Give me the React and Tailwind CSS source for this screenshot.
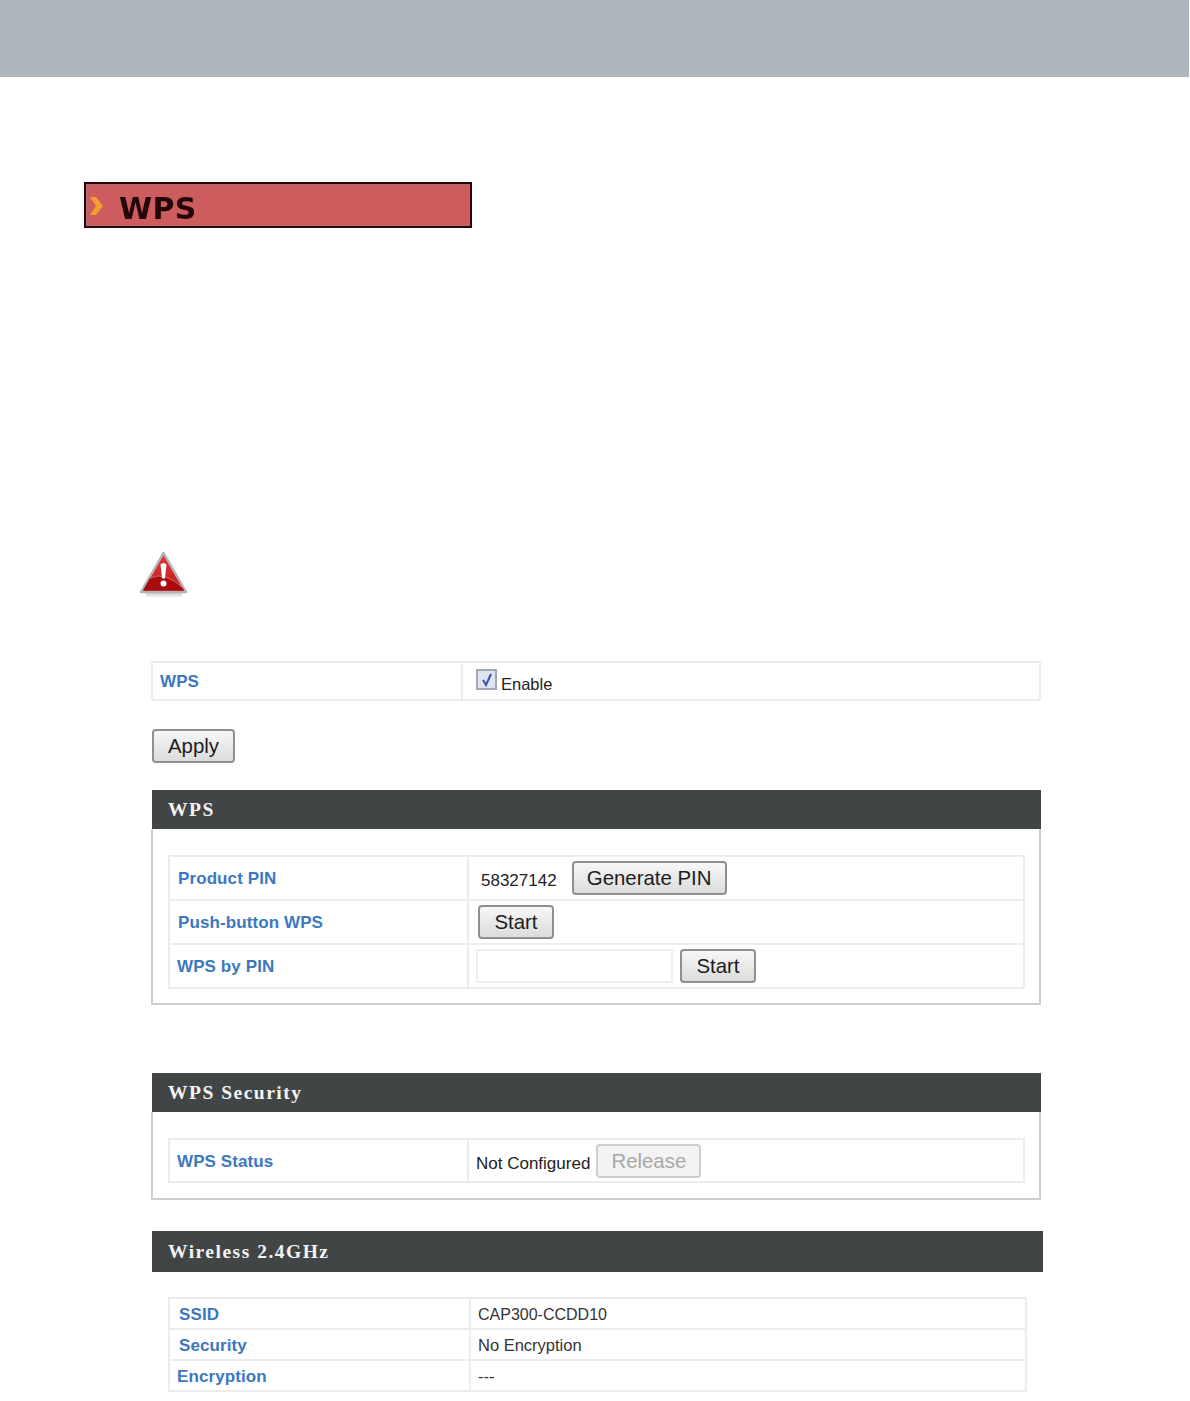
import React from 'react';

const Label = ({ children, className = '' }) => (
  <span className={`font-bold text-[#3c78c0] text-[17px] tracking-[0.1px] mt-[2px] ${className}`}>{children}</span>
);

const Btn = ({ children, className = '', disabled }) => (
  <button
    disabled={disabled}
    className={`h-[34px] rounded-[4px] border-2 pt-[1px] text-[20.4px] leading-none ${
      disabled
        ? 'border-[#cdcdcd] bg-[#f3f3f3] text-[#a8a8a8]'
        : 'border-[#8f8f8f] bg-gradient-to-b from-[#f7f7f7] to-[#dcdcdc] text-[#1c1c1c]'
    } ${className}`}
  >
    {children}
  </button>
);

const PanelHead = ({ children, className = 'h-[39px]' }) => (
  <div className={`bg-[#424546] flex items-center pl-[16px] font-['Liberation_Serif',serif] font-bold text-[19.5px] tracking-[1.5px] text-[#f4f4f4] ${className}`}>
    {children}
  </div>
);

const Row = ({ label, children, rowClass = 'h-[44px]', labelClass = 'pl-[8px]', split = 'w-[299px]', last }) => (
  <div className={`flex ${rowClass} ${last ? '' : 'border-b-2 border-[#ececec]'}`}>
    <div className={`${split} shrink-0 flex items-center border-r-2 border-[#ececec] ${labelClass}`}>
      <Label>{label}</Label>
    </div>
    <div className="flex-1 flex items-center">{children}</div>
  </div>
);

const WarningIcon = () => (
  <svg width="50" height="48" viewBox="0 0 50 48" className="block">
    <defs>
      <linearGradient id="warnRed" x1="0" y1="0" x2="0" y2="1">
        <stop offset="0" stopColor="#dc3a3c" />
        <stop offset="1" stopColor="#c01a1c" />
      </linearGradient>
      <linearGradient id="warnShadow" x1="0" y1="0" x2="0" y2="1">
        <stop offset="0" stopColor="#c4c4c4" />
        <stop offset="1" stopColor="#ffffff" />
      </linearGradient>
    </defs>
    <rect x="7" y="41" width="36" height="6" fill="url(#warnShadow)" />
    <path d="M24.5 2 L47 41 L2 41 Z" fill="url(#warnRed)" stroke="#b4b4b4" strokeWidth="2.5" strokeLinejoin="round" />
    <path d="M4 39.5 L11 27 Q26 20 44 37 L45 39.5 Z" fill="#a80c0e" />
    <path d="M11 27 Q26 20 44 37" fill="none" stroke="#e88585" strokeWidth="1" opacity="0.7" />
    <path d="M21.5 13.5 Q24.5 10.5 27.5 13.5 L26 27 Q24.5 28.5 23 27 Z" fill="#fff" />
    <circle cx="24.5" cy="32.5" r="3" fill="#fff" />
  </svg>
);

export default function App() {
  return (
    <div className="bg-white h-[1401px] w-[1190px] overflow-hidden font-['Liberation_Sans',Arial,sans-serif] text-[#222]">
      <div className="h-[77px] w-[1189px] bg-[#adb5bd]" />

      {/* Section title */}
      <div className="ml-[84px] mt-[105px] w-[388px] h-[46px] border-2 border-[#2e0206] bg-[#cd5c5e] shadow-[inset_0_0_0_1px_#a87072] flex items-center">
        <svg width="18" height="22" viewBox="0 0 18 22" className="ml-[2px] mt-[2px] shrink-0 blur-[0.7px]">
          <path d="M2 2 L8 2 L15 11 L8 20 L2 20 L8 11 Z" fill="#efa030" />
        </svg>
        <span className="ml-[13px] mt-[7px] font-['DejaVu_Sans',sans-serif] font-bold text-[30px] leading-none text-[#24060a] blur-[0.6px] tracking-[0.3px]">WPS</span>
      </div>

      <div className="ml-[139px] mt-[323px]">
        <WarningIcon />
      </div>

      {/* WPS enable */}
      <div className="ml-[151px] mt-[62px] w-[890px] border-2 border-[#ececec]">
        <Row label="WPS" rowClass="h-[36px]" labelClass="pl-[7px]" split="w-[310px]" last>
          <div className="flex items-center ml-[13px]">
            <span className="w-[21px] h-[21px] border-2 border-[#a4a8b0] bg-[#dfe4f2] flex items-center justify-center mb-[3px]">
              <svg width="14" height="14" viewBox="0 0 14 14">
                <path d="M3 7 L6 12 L11 1" fill="none" stroke="#3c4fa8" strokeWidth="2" />
              </svg>
            </span>
            <span className="ml-[4px] text-[16.5px] mt-[7px]">Enable</span>
          </div>
        </Row>
      </div>

      <Btn className="block ml-[152px] mt-[28px] w-[83px]">Apply</Btn>

      {/* WPS */}
      <div className="ml-[151px] mt-[27px] w-[890px] h-[215px] flex flex-col">
        <PanelHead className="h-[39px] ml-[1px]">WPS</PanelHead>
        <div className="flex-1 border-2 border-t-0 border-[#cfcfcf]">
          <div className="ml-[15px] mt-[26px] w-[857px] border-2 border-[#ececec]">
            <Row label="Product PIN">
              <span className="ml-[12px] text-[17px] mt-[5px]">58327142</span>
              <Btn className="ml-[15px] w-[155px]">Generate PIN</Btn>
            </Row>
            <Row label="Push-button WPS">
              <Btn className="ml-[9px] w-[76px]">Start</Btn>
            </Row>
            <Row label="WPS by PIN" labelClass="pl-[7px]" rowClass="h-[42px]" last>
              <input className="ml-[7px] w-[197px] h-[34px] border-2 border-[#eeeeee] rounded-[2px] bg-white" />
              <Btn className="ml-[7px] w-[76px]">Start</Btn>
            </Row>
          </div>
        </div>
      </div>

      {/* WPS Security */}
      <div className="ml-[151px] mt-[68px] w-[890px] h-[127px] flex flex-col">
        <PanelHead className="h-[39px] ml-[1px]">WPS Security</PanelHead>
        <div className="flex-1 border-2 border-t-0 border-[#cfcfcf]">
          <div className="ml-[15px] mt-[26px] w-[857px] border-2 border-[#ececec]">
            <Row label="WPS Status" labelClass="pl-[7px]" last rowClass="h-[41px]">
              <span className="ml-[7px] text-[17px] mt-[6px]">Not Configured</span>
              <Btn disabled className="ml-[6px] mt-[1px] w-[105px]">Release</Btn>
            </Row>
          </div>
        </div>
      </div>

      {/* Wireless 2.4GHz */}
      <div className="ml-[152px] mt-[31px] w-[891px]">
        <PanelHead className="h-[41px]">Wireless 2.4GHz</PanelHead>
        <div className="ml-[16px] mt-[25px] w-[859px] border-2 border-[#ececec]">
          <Row label="SSID" rowClass="h-[31px]" labelClass="pl-[9px]" split="w-[301px]">
            <span className="ml-[7px] mt-[2px] text-[16px] text-[#333]">CAP300-CCDD10</span>
          </Row>
          <Row label="Security" rowClass="h-[31px]" labelClass="pl-[9px]" split="w-[301px]">
            <span className="ml-[7px] mt-[2px] text-[16.5px] text-[#333]">No Encryption</span>
          </Row>
          <Row label="Encryption" rowClass="h-[29px]" labelClass="pl-[7px]" split="w-[301px]" last>
            <span className="ml-[7px] mt-[2px] text-[16.5px] text-[#333]">---</span>
          </Row>
        </div>
      </div>
    </div>
  );
}
